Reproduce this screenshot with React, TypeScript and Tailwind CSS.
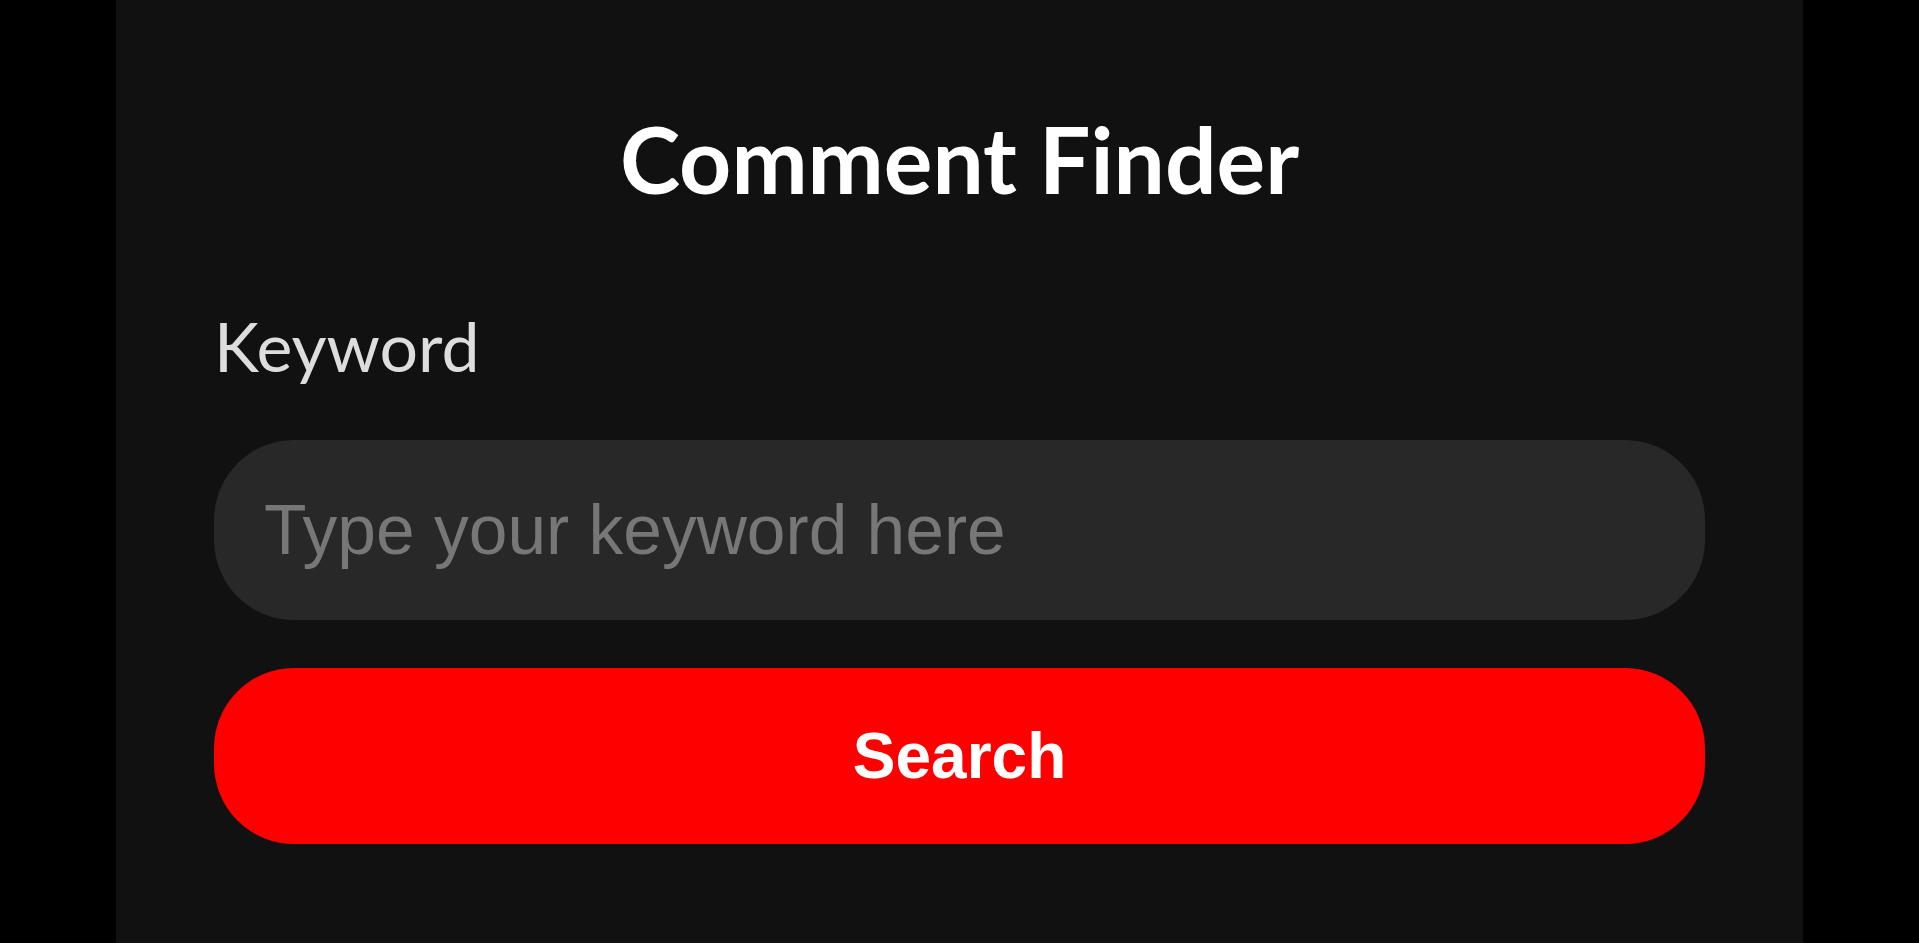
import React, { useState } from 'react';

export default function App() {
  const [keyword, setKeyword] = useState('');

  return (
    <div className="min-h-screen bg-black flex justify-center">
      <div className="w-[1687px] min-h-screen bg-[#111111] px-[98px] pt-[113px]">
        {/* Header */}
        <h1 className="text-center text-white font-bold text-[91px] leading-none font-['Lato',sans-serif]">
          Comment Finder
        </h1>

        {/* Form */}
        <div className="mt-[108px] flex flex-col">
          <label className="text-[#dddddd] text-[68px] leading-none font-['Lato',sans-serif]">Keyword</label>
          <input
            value={keyword}
            onChange={e => setKeyword(e.target.value)}
            placeholder="Type your keyword here"
            className="mt-[60px] h-[180px] w-full rounded-[80px] bg-[#282828] px-[50px] text-[69.5px] text-white placeholder:text-[#777777] outline-none font-['Liberation_Sans',Arial,sans-serif]"
          />
          <button className="mt-[48px] h-[176px] w-full rounded-[80px] bg-[#ff0000] text-white font-bold text-[64px] font-['Liberation_Sans',Arial,sans-serif]">
            Search
          </button>
        </div>
      </div>
    </div>
  );
}
